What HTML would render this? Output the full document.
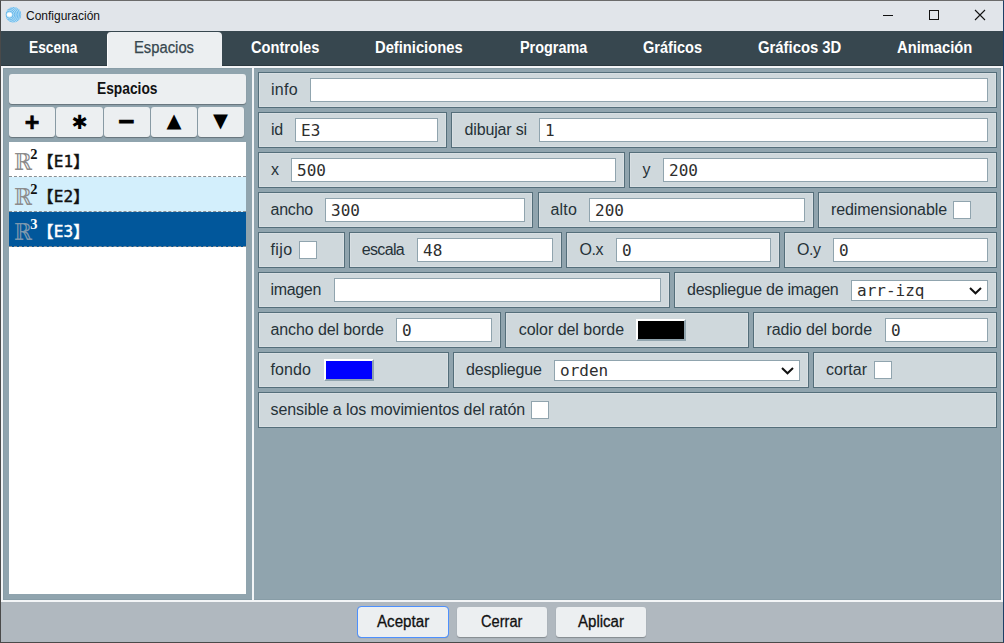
<!DOCTYPE html>
<html lang="es">
<head>
<meta charset="utf-8">
<title>Configuración</title>
<style>
*{box-sizing:border-box;margin:0;padding:0}
html,body{width:1004px;height:643px;overflow:hidden;background:#b0b8bf}
body{position:relative;font-family:"Liberation Sans",sans-serif;font-size:16px;color:#212121}
.abs{position:absolute}
#frame{left:0;top:0;width:1004px;height:643px;border:1px solid #4a4a4a;border-top-color:#6b6b6b;border-right-color:#1c3f66;z-index:50;pointer-events:none}
#title{left:1px;top:1px;width:1002px;height:30px;background:#e1e5ea}
#title .cap{position:absolute;left:25px;top:0;line-height:30px;font-size:12px;color:#111}
#tabs{z-index:2;left:1px;top:31px;width:1002px;height:35px;background:#37474f;border-bottom:1px solid #2c3a41}
.tx{position:absolute;top:0;display:inline-block;transform-origin:0 50%;white-space:nowrap}
.tab{position:absolute;top:0;height:35px;line-height:33px;color:#fff;font-weight:bold;font-size:16px}
.tab.on{top:1px;height:36px;background:#eceff1;color:#37474f;font-weight:normal;-webkit-text-stroke:.25px #37474f;border-radius:4px 4px 0 0;line-height:31px;border-left:1px solid #fbfcfc}
#panel{left:1px;top:66px;width:1002px;height:536px;background:#90a4ae;border:2px solid #f3f5f7;box-shadow:inset 0 0 0 1px #889da7}
#divider{left:252px;top:68px;width:2px;height:532px;background:#f3f5f7}
#bottom{left:1px;top:602px;width:1002px;height:40px;background:#b0b8bf}
.btn{position:absolute;top:5px;width:90px;height:30px;line-height:29px;-webkit-text-stroke:.3px #111;background:#eceff1;border-radius:3px;font-size:16px;color:#111;box-shadow:0 1px 1px rgba(0,0,0,.25)}
.btn.foc{outline:1px solid #4d90fe}
/* left */
#lhead{left:9px;top:74px;width:237px;height:30px;background:#eceff1;border-radius:3px;line-height:29px;font-weight:bold;font-size:16px;color:#111;box-shadow:0 1px 1px rgba(0,0,0,.3)}
.lb{position:absolute;top:107px;width:46px;height:30px;background:#eceff1;border-radius:3px;box-shadow:0 1px 1px rgba(0,0,0,.3);text-align:center;color:#000}
#list{left:9px;top:142px;width:237px;height:452px;background:#fff}
.it{position:relative;height:35px;border-bottom:1px dashed #8a8f93;white-space:nowrap;font-family:"DejaVu Sans Mono","Noto Sans CJK SC",monospace;font-size:16px;color:#111}
.it .R{position:absolute;left:5px;top:5px;font-family:"DejaVu Serif","DejaVu Sans",serif;font-size:23.5px;color:#8c8c8c;line-height:30px;transform:scaleX(.92);transform-origin:0 50%}
.it .sup{position:absolute;left:21.3px;top:3.5px;font-family:"Liberation Serif",serif;font-weight:bold;font-size:14.5px;color:#111;line-height:16px}
.it .nm{position:absolute;left:28.5px;top:8px;line-height:24px;letter-spacing:.2px;-webkit-text-stroke:.45px currentColor}
.it.hov{background:#d3effc}
.it.cur{background:#01579b;color:#fff}
.it.cur .sup,.it.cur .nm{color:#fff}
.it.cur .R{color:#7d97ad}
/* right */
.box{position:absolute;height:36px;background:#cfd8dc;border:1px solid #546e7a;box-shadow:inset 0 0 0 1px #d8dfe3}
.lab{position:absolute;top:0;line-height:33px;color:#263238;white-space:nowrap;font-size:16px}
.inp,.sel{position:absolute;top:5px;height:24px;background:#fff;border:1px solid #90a4ae;font-family:"DejaVu Sans Mono",monospace;font-size:16px;line-height:23px;padding-left:5px;color:#2e2e2e;white-space:nowrap;overflow:hidden}
.sel{top:7px;height:21px;line-height:20px}
.chev{position:absolute;right:5px;top:6px}
.chk{position:absolute;top:8px;width:18px;height:18px;background:#fff;border:1px solid #90a4ae}
.col{position:absolute;top:6px;width:50px;height:22px;border:2px solid;border-color:#fff #90a4ae #90a4ae #fff}
</style>
</head>
<body>
<div class="abs" id="title">
<svg class="abs" style="left:4px;top:5px" width="18" height="18" viewBox="5 6 18 18">
<defs><clipPath id="ic"><circle cx="13.4" cy="14.7" r="7.8"/></clipPath></defs>
<circle cx="13.4" cy="14.7" r="7.8" fill="#b4e0f6"/>
<g clip-path="url(#ic)" fill="none" stroke="#58aeea" stroke-width=".8">
<circle cx="9.5" cy="14.7" r="3.6"/><circle cx="9.5" cy="14.7" r="5.2"/><circle cx="9.5" cy="14.7" r="6.8"/><circle cx="9.5" cy="14.7" r="8.4"/><circle cx="9.5" cy="14.7" r="10"/><circle cx="9.5" cy="14.7" r="11.6"/>
</g>
<ellipse cx="9.4" cy="14.7" rx="2.5" ry="2.1" fill="#fff"/>
</svg>
<span class="cap">Configuración</span>
<svg class="abs" style="left:875px;top:4px" width="120" height="22" viewBox="876 5 120 22" fill="none" stroke="#111" stroke-width="1" shape-rendering="crispEdges">
<path d="M883 15.5H893"/>
<rect x="929.5" y="10.5" width="9" height="9"/>
</svg>
<svg class="abs" style="left:973px;top:8px" width="12" height="12" viewBox="0 0 12 12" fill="none" stroke="#111" stroke-width="1.1"><path d="M1 1L11 11M11 1L1 11"/></svg>
</div>
<div class="abs" id="tabs">
<div class="tab" style="left:0px;width:106px"><span class="tx" style="left:28.00px;transform:scaleX(0.8618)">Escena</span></div>
<div class="tab on" style="left:106px;width:115px"><span class="tx" style="left:25.80px;transform:scaleX(0.9242)">Espacios</span></div>
<div class="tab" style="left:221px;width:126px"><span class="tx" style="left:28.60px;transform:scaleX(0.9147)">Controles</span></div>
<div class="tab" style="left:347px;width:143px"><span class="tx" style="left:27.30px;transform:scaleX(0.9207)">Definiciones</span></div>
<div class="tab" style="left:490px;width:124px"><span class="tx" style="left:28.60px;transform:scaleX(0.9009)">Programa</span></div>
<div class="tab" style="left:614px;width:115px"><span class="tx" style="left:27.90px;transform:scaleX(0.9088)">Gráficos</span></div>
<div class="tab" style="left:729px;width:139px"><span class="tx" style="left:27.60px;transform:scaleX(0.9275)">Gráficos 3D</span></div>
<div class="tab" style="left:868px;width:134px"><span class="tx" style="left:28.30px;transform:scaleX(0.9206)">Animación</span></div>
</div>
<div class="abs" id="panel"></div>
<div class="abs" id="divider"></div>
<div class="abs" id="lhead"><span class="tx" style="left:87.70px;transform:scaleX(0.8610)">Espacios</span></div>
<div class="lb" style="left:9px"><span style="font:bold 25px/30px 'Liberation Sans',sans-serif;position:relative;top:0px;left:0px;-webkit-text-stroke:.6px #000">+</span></div>
<div class="lb" style="left:56px;width:47px"><span style="font:bold 19.5px/30px 'DejaVu Sans',sans-serif;position:relative;top:1px">✱</span></div>
<div class="lb" style="left:104px"><span style="font:bold 28px/30px 'Liberation Sans',sans-serif;position:relative;top:-.5px;left:-.5px;-webkit-text-stroke:.7px #000">−</span></div>
<div class="lb" style="left:151px"><span style="font:19.5px/30px 'DejaVu Sans',sans-serif;position:relative;top:-1.5px">▲</span></div>
<div class="lb" style="left:198px"><span style="font:19.5px/30px 'DejaVu Sans',sans-serif;position:relative;top:-1.5px;left:-.5px">▼</span></div>
<div class="abs" id="list">
  <div class="it"><span class="R">ℝ</span><span class="sup">2</span><span class="nm">【E1】</span></div>
  <div class="it hov"><span class="R">ℝ</span><span class="sup">2</span><span class="nm">【E2】</span></div>
  <div class="it cur"><span class="R">ℝ</span><span class="sup">3</span><span class="nm">【E3】</span></div>
</div>
<div class="box" style="left:258px;top:72px;width:739px"><span class="lab" style="left:12.00px;letter-spacing:0.301px">info</span><span class="inp" style="left:51px;width:678px"></span></div>
<div class="box" style="left:258px;top:112px;width:189px"><span class="lab" style="left:12.00px;letter-spacing:-0.227px">id</span><span class="inp" style="left:36px;width:143px">E3</span></div>
<div class="box" style="left:451px;top:112px;width:546px"><span class="lab" style="left:12.50px;letter-spacing:-0.153px">dibujar si</span><span class="inp" style="left:87px;width:449px">1</span></div>
<div class="box" style="left:258px;top:152px;width:367px"><span class="lab" style="left:12.00px;letter-spacing:0.000px">x</span><span class="inp" style="left:32px;width:325px">500</span></div>
<div class="box" style="left:629px;top:152px;width:368px"><span class="lab" style="left:12.50px;letter-spacing:0.500px">y</span><span class="inp" style="left:33px;width:325px">200</span></div>
<div class="box" style="left:258px;top:192px;width:275px"><span class="lab" style="left:11.50px;letter-spacing:-0.219px">ancho</span><span class="inp" style="left:66px;width:200px">300</span></div>
<div class="box" style="left:538px;top:192px;width:276px"><span class="lab" style="left:11.50px;letter-spacing:0.176px">alto</span><span class="inp" style="left:50px;width:216px">200</span></div>
<div class="box" style="left:818px;top:192px;width:179px"><span class="lab" style="left:12.00px;letter-spacing:-0.094px">redimensionable</span><span class="chk" style="left:134px"></span></div>
<div class="box" style="left:258px;top:232px;width:87px"><span class="lab" style="left:11.50px;letter-spacing:0.387px">fijo</span><span class="chk" style="left:40px"></span></div>
<div class="box" style="left:349px;top:232px;width:213px"><span class="lab" style="left:11.75px;letter-spacing:-0.667px">escala</span><span class="inp" style="left:67px;width:136px">48</span></div>
<div class="box" style="left:566px;top:232px;width:214px"><span class="lab" style="left:12.50px;letter-spacing:-0.464px">O.x</span><span class="inp" style="left:49px;width:155px">0</span></div>
<div class="box" style="left:784px;top:232px;width:213px"><span class="lab" style="left:12.00px;letter-spacing:-0.464px">O.y</span><span class="inp" style="left:48px;width:155px">0</span></div>
<div class="box" style="left:258px;top:272px;width:412px"><span class="lab" style="left:11.50px;letter-spacing:-0.331px">imagen</span><span class="inp" style="left:75px;width:327px"></span></div>
<div class="box" style="left:674px;top:272px;width:323px"><span class="lab" style="left:12.00px;letter-spacing:-0.253px">despliegue de imagen</span><span class="sel" style="left:176px;width:137px">arr-izq<svg class="chev" viewBox="0 0 13 8" width="13" height="8"><path d="M1 1 L6.5 6.3 L12 1" fill="none" stroke="#111" stroke-width="2"/></svg></span></div>
<div class="box" style="left:258px;top:312px;width:243px"><span class="lab" style="left:11.50px;letter-spacing:-0.101px">ancho del borde</span><span class="inp" style="left:137px;width:96px">0</span></div>
<div class="box" style="left:505px;top:312px;width:244px"><span class="lab" style="left:12.75px;letter-spacing:-0.040px">color del borde</span><span class="col" style="left:130px;background:#000"></span></div>
<div class="box" style="left:753px;top:312px;width:244px"><span class="lab" style="left:12.40px;letter-spacing:-0.077px">radio del borde</span><span class="inp" style="left:131px;width:103px">0</span></div>
<div class="box" style="left:258px;top:352px;width:191px"><span class="lab" style="left:11.50px;letter-spacing:0.091px">fondo</span><span class="col" style="left:65px;background:#0000ff"></span></div>
<div class="box" style="left:453px;top:352px;width:356px"><span class="lab" style="left:12.00px;letter-spacing:-0.166px">despliegue</span><span class="sel" style="left:100px;width:246px">orden<svg class="chev" viewBox="0 0 13 8" width="13" height="8"><path d="M1 1 L6.5 6.3 L12 1" fill="none" stroke="#111" stroke-width="2"/></svg></span></div>
<div class="box" style="left:813px;top:352px;width:184px"><span class="lab" style="left:12.00px;letter-spacing:0.016px">cortar</span><span class="chk" style="left:60px"></span></div>
<div class="box" style="left:258px;top:392px;width:739px"><span class="lab" style="left:11.50px;letter-spacing:-0.095px">sensible a los movimientos del ratón</span><span class="chk" style="left:272px"></span></div>
<div class="abs" id="bottom">
<div class="btn foc" style="left:357px"><span class="tx" style="left:19.00px;transform:scaleX(0.9467)">Aceptar</span></div>
<div class="btn" style="left:456px"><span class="tx" style="left:24.40px;transform:scaleX(0.9130)">Cerrar</span></div>
<div class="btn" style="left:555px"><span class="tx" style="left:22.00px;transform:scaleX(0.9406)">Aplicar</span></div>
</div>
<div class="abs" id="frame"></div>
</body>
</html>
